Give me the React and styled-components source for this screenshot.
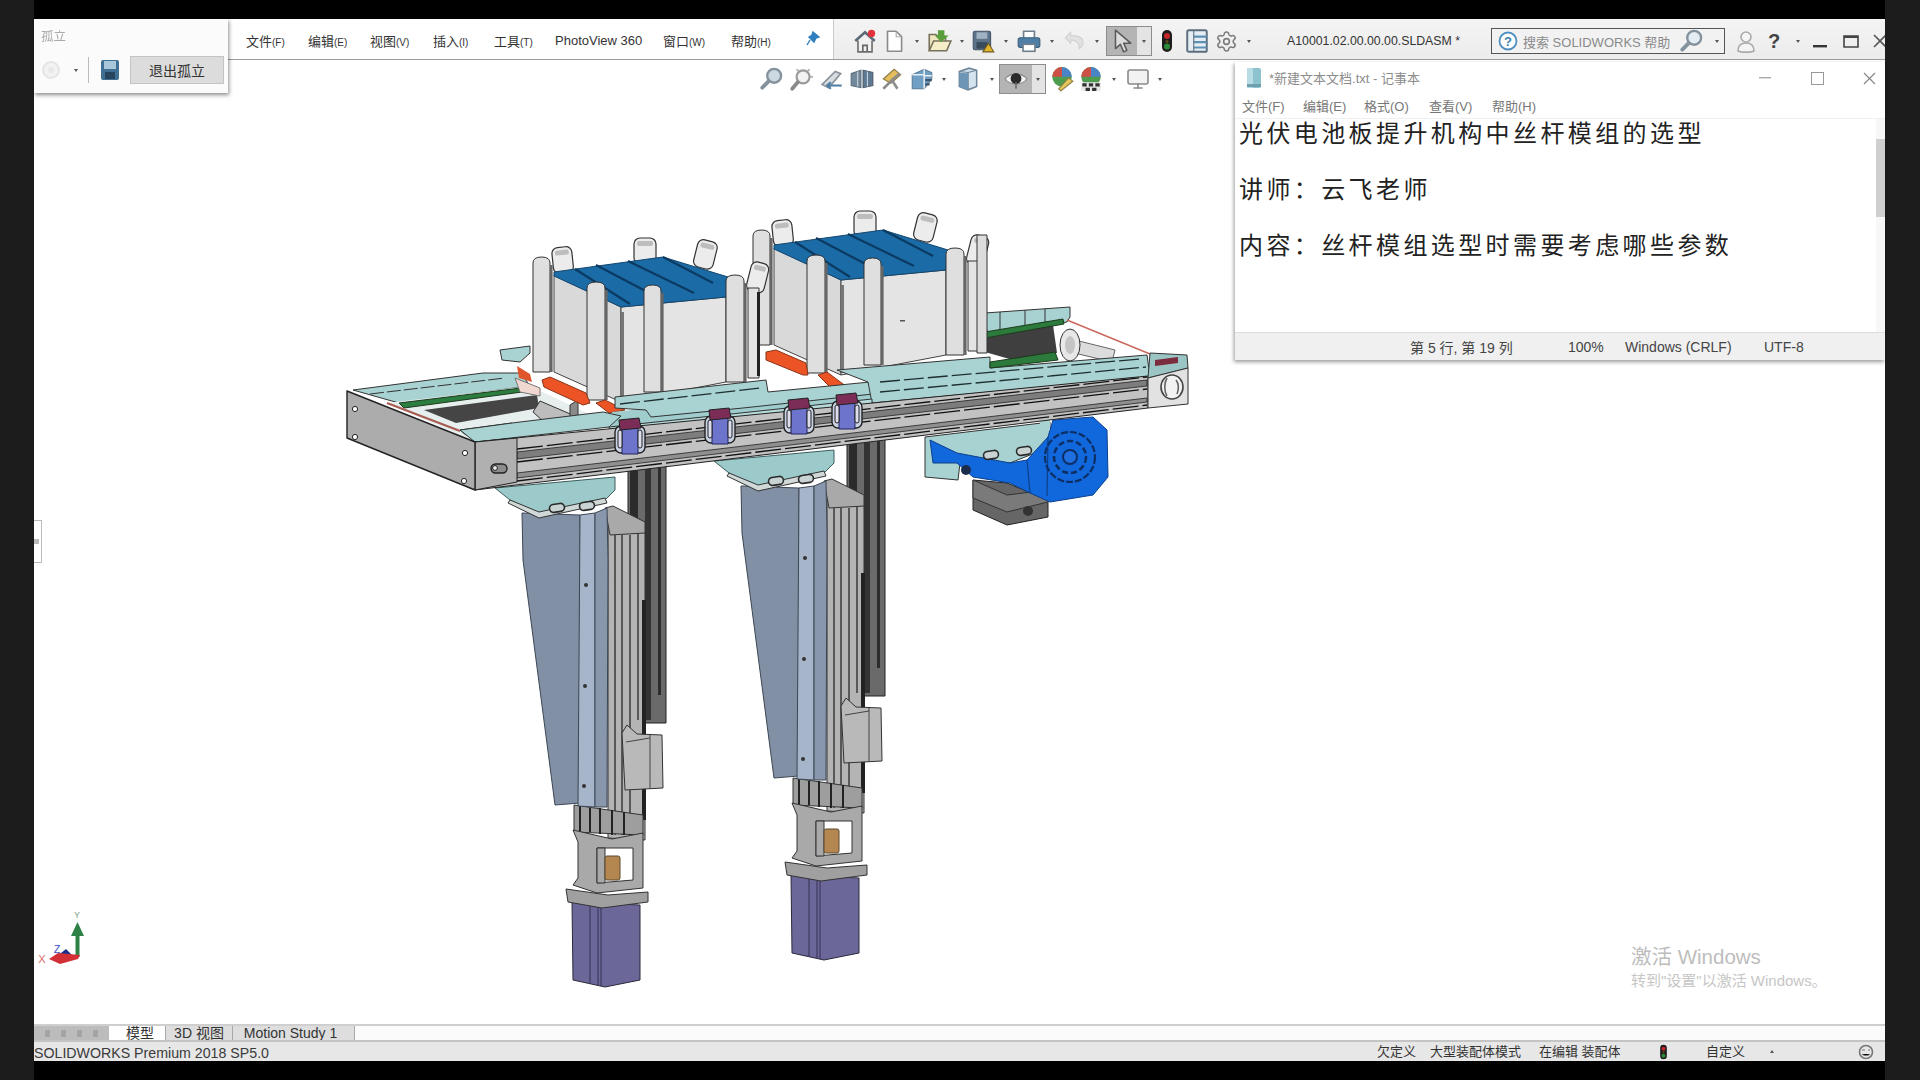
import React from "react";
import styled, { createGlobalStyle } from "styled-components";
import { Settings, Monitor } from "lucide-react";

const Global = createGlobalStyle`
  html, body { margin: 0; padding: 0; background: #000; }
  body { width: 1920px; height: 1080px; overflow: hidden; font-family: "Liberation Sans", "Noto Sans CJK SC", sans-serif; }
`;

const Page = styled.div`
  display: grid;
  grid-template-columns: 34px 1fr 35px;
  width: 1920px;
  height: 1080px;
  background: #000;
`;
const SideBar = styled.div`background: #1c1c1c;`;
const Screen = styled.div`
  position: relative;
  display: flex;
  flex-direction: column;
  min-width: 0;
  filter: blur(0.5px);
`;
const Letterbox = styled.div`flex: 0 0 19px; background: #000;`;

const TopBar = styled.header`
  flex: 0 0 41px;
  display: flex;
  align-items: center;
  background: linear-gradient(#f4f4f4, #ececec);
  border-bottom: 1px solid #9c9c9c;
  box-sizing: border-box;
  padding-left: 212px;
  overflow: hidden;
`;
const Menu = styled.nav`
  display: flex;
  align-items: center;
  flex: 0 0 605px;
  height: 100%;
  background: #fff;
  margin-left: -18px;
  padding-left: 18px;
  box-sizing: border-box;
`;
const MenuItem = styled.span`
  flex: 0 0 ${p => p.$w}px;
  font-size: 13px;
  color: #333;
  white-space: nowrap;
  position: relative;
  top: 1px;
  small { font-size: 10px; }
`;
const PinSlot = styled.span`
  flex: 1;
  display: flex;
  justify-content: flex-end;
  padding-right: 13px;
`;
const ToolRow = styled.div`
  display: flex;
  flex: none;
  align-items: center;
  height: 100%;
  padding: 4px 0 0 16px;
  border-left: 1px solid #c9c9c9;
  box-sizing: border-box;
`;
const Slot = styled.span`
  flex: 0 0 ${p => p.$w}px;
  min-width: 0;
  display: flex;
  justify-content: center;
  align-items: center;
  & > svg { flex: none; }
`;
const Arrow = styled.span`
  flex: 0 0 ${p => p.$w || 20}px;
  display: flex;
  justify-content: center;
  align-items: center;
  &::before {
    content: "";
    border: 2.5px solid transparent;
    border-top: 3px solid #555;
    border-bottom: 0;
  }
`;
const UpArrow = styled(Arrow)`
  transform: rotate(180deg);
`;
const PressedGroup = styled.span`
  flex: 0 0 ${p => p.$w}px;
  height: ${p => p.$h}px;
  display: flex;
  box-sizing: border-box;
  border: 1px solid #8d8d8d;
  background: linear-gradient(90deg, #b4b4b4 0 ${p => p.$split}px, #e4e4e4 ${p => p.$split}px);
  align-items: center;
`;
const DocTitle = styled.span`
  flex: 0 0 175px;
  margin-left: 29px;
  font-size: 12.3px;
  color: #333;
  white-space: nowrap;
`;
const SearchBox = styled.div`
  flex: 0 0 234px;
  height: 26px;
  margin-left: 29px;
  display: flex;
  align-items: center;
  box-sizing: border-box;
  border: 1.5px solid #555;
  background: #f2f2f2;
  padding-left: 6px;
  gap: 5px;
  span.hint { flex: 1; font-size: 13px; color: #8a8a8a; white-space: nowrap; }
`;
const WinRow = styled.div`
  display: flex;
  align-items: center;
  margin-left: 8px;
`;
const HeadsUp = styled.div`
  position: absolute;
  left: 723px;
  top: 64px;
  height: 30px;
  display: flex;
  align-items: center;
  z-index: 1;
`;

const Workspace = styled.main`
  flex: 1;
  min-height: 0;
  background: #fff;
  svg.stage { display: block; }
`;

const TabBar = styled.div`
  flex: 0 0 18px;
  min-height: 0;
  display: flex;
  background: #fbfbfb;
  border-top: 2px solid #cfcfcf;
  border-bottom: 2px solid #c4c4c4;
  box-sizing: border-box;
  overflow: hidden;
`;
const TabNav = styled.div`
  flex: 0 0 75px;
  display: flex;
  align-items: center;
  justify-content: space-around;
  background: #bcbcbc;
  padding: 0 6px;
  box-sizing: border-box;
  i { width: 5px; height: 7px; background: #a4a4a4; display: block; }
`;
const Tab = styled.div`
  flex: 0 0 ${p => p.$w}px;
  display: flex;
  align-items: center;
  justify-content: center;
  font-size: 14px;
  line-height: 14px;
  color: #333;
  white-space: nowrap;
  box-sizing: border-box;
  padding-left: ${p => p.$pl || 0}px;
  padding-right: ${p => p.$pr || 0}px;
  background: ${p => (p.$on ? "#fff" : "#dedede")};
  border-right: ${p => (p.$on ? "none" : "1px solid #a8a8a8")};
  border-left: ${p => (p.$first ? "1px solid #a8a8a8" : "none")};
`;
const Status = styled.footer`
  flex: 0 0 19px;
  min-height: 0;
  display: flex;
  align-items: center;
  background: #e7e7e7;
  overflow: hidden;
  font-size: 13px;
  line-height: 16px;
  color: #333;
  white-space: nowrap;
`;
const StatusLeft = styled.span`
  flex: 0 0 1343px;
  font-size: 14.2px;
  color: #3a3a3a;
  position: relative;
  top: 1px;
`;
const StatusItem = styled.span`
  flex: 0 0 ${p => p.$w}px;
  display: flex;
  align-items: center;
`;

const IsolatePanel = styled.section`
  position: absolute;
  left: 0;
  top: 19px;
  width: 194px;
  height: 74px;
  box-sizing: border-box;
  background: #fbfbfb;
  box-shadow: 1px 2px 4px rgba(0, 0, 0, .45);
  padding: 10px 0 0 7px;
  z-index: 3;
`;
const IsolateTitle = styled.div`
  font-size: 12.5px;
  color: #aaa;
  line-height: 16px;
`;
const IsolateRow = styled.div`
  display: flex;
  align-items: center;
  margin-top: 11px;
  margin-left: -7px;
  height: 28px;
`;
const Divider = styled.span`
  flex: 0 0 1px;
  height: 26px;
  background: #bbb;
  margin: 0 10px 0 5px;
`;
const ExitButton = styled.button`
  flex: 0 0 94px;
  margin-left: 9px;
  height: 28px;
  padding: 0;
  border: 1px solid #c4c4c4;
  background: #dcdcdc;
  font: 14px "Noto Sans CJK SC", sans-serif;
  color: #333;
`;

const Notepad = styled.section`
  position: absolute;
  left: 1201px;
  right: 0;
  top: 62px;
  height: 298px;
  display: flex;
  flex-direction: column;
  background: #fff;
  box-shadow: -1px 2px 4px rgba(0, 0, 0, .4);
  z-index: 2;
`;
const NoteTitle = styled.div`
  flex: 0 0 32px;
  display: flex;
  align-items: center;
  padding-left: 11px;
  font-size: 13px;
  color: #8c8c8c;
  white-space: nowrap;
`;
const NoteName = styled.span`
  flex: 0 0 484px;
  margin-left: 7px;
  position: relative;
  top: -1px;
`;
const NoteMenu = styled.div`
  flex: 0 0 24px;
  display: flex;
  align-items: center;
  padding-left: 7px;
  font-size: 13px;
  color: #777;
  position: relative;
  top: -1px;
`;
const NoteMenuItem = styled.span`
  flex: 0 0 ${p => p.$w}px;
  white-space: nowrap;
`;
const NoteBody = styled.div`
  flex: 1;
  position: relative;
  display: flex;
  min-height: 0;
  border-top: 1px solid #f0f0f0;
`;
const NoteText = styled.div`
  flex: 1;
  padding: 0 0 0 4px;
  font-family: "Noto Sans CJK SC", sans-serif;
  font-size: 24px;
  font-weight: 400;
  letter-spacing: 3.4px;
  line-height: 56px;
  color: #222;
  white-space: pre;
  margin-top: -15px;
`;
const ScrollTrack = styled.div`
  flex: 0 0 9px;
  background: #f7f7f7;
  position: relative;
  &::before {
    content: "";
    position: absolute;
    left: 0;
    right: 0;
    top: 20px;
    height: 78px;
    background: #cfcfcf;
  }
`;
const NoteStatus = styled.div`
  flex: 0 0 27px;
  display: flex;
  align-items: center;
  background: #f0f0f0;
  border-top: 1px solid #ddd;
  padding-left: 175px;
  font-size: 14px;
  color: #444;
  white-space: nowrap;
`;
const NoteStatusItem = styled.span`
  flex: 0 0 ${p => p.$w}px;
`;

const Watermark = styled.div`
  position: absolute;
  left: 1597px;
  top: 944px;
  color: #bdbdbd;
  font-size: 20.5px;
  line-height: 26px;
  white-space: nowrap;
  z-index: 1;
  small { display: block; font-size: 15px; line-height: 21px; color: #c6c6c6; }
`;
const Handle = styled.div`
  position: absolute;
  left: 0;
  top: 520px;
  width: 8px;
  height: 43px;
  box-sizing: border-box;
  border: 1px solid #bbb;
  border-left: 0;
  background: #fff;
  z-index: 1;
  &::after {
    content: "";
    position: absolute;
    left: 0;
    top: 18px;
    width: 5px;
    height: 5px;
    background: #bbb;
  }
`;

/* ---------- toolbar pictures ---------- */
const Pic = ({ w = 26, h = 26, children, vb = "0 0 24 24" }) => (
  <svg width={w} height={h} viewBox={vb} fill="none">{children}</svg>
);
const IHome = () => (
  <Pic>
    <path d="M3 12 12 4l9 8" stroke="#5c6a78" strokeWidth="2.4" />
    <path d="M5.5 11.5V22h13V11.5" fill="#f0f0f0" stroke="#6d6d6d" strokeWidth="1.5" />
    <path d="M10 22v-6h4v6" stroke="#666" strokeWidth="1.5" />
    <circle cx="18" cy="5" r="3.4" fill="#e2333c" />
  </Pic>
);
const IDoc = () => (
  <Pic>
    <path d="M6 3h8l5 5v13.5H6z" fill="#fff" stroke="#8b8b8b" strokeWidth="1.5" strokeLinejoin="round" />
    <path d="M14 3v5h5" stroke="#aaa" />
  </Pic>
);
const IOpen = () => (
  <Pic>
    <path d="M3 21V6h6l2 2h7v4" fill="#f0e6c0" stroke="#77705a" strokeWidth="1.5" />
    <path d="M3 21l4-9h16l-4 9z" fill="#f5ecc8" stroke="#77705a" strokeWidth="1.5" />
    <path d="M11 3h6v5h4l-7 6-6-6h3z" fill="#5a9e3c" transform="translate(0 -1)" />
  </Pic>
);
const ISave = () => (
  <Pic>
    <rect x="3" y="3" width="16" height="17" rx="1.5" fill="#5c7288" stroke="#44566a" />
    <rect x="6" y="4" width="10" height="6" fill="#9fb1c2" />
    <rect x="6" y="13" width="10" height="6" fill="#394a5c" />
    <path d="M12 22l5-8 5 8z" fill="#e2b32c" stroke="#6d5a1c" />
  </Pic>
);
const IPrint = () => (
  <Pic>
    <path d="M7 9V3h10v6" fill="#fff" stroke="#6f7f8e" strokeWidth="1.5" />
    <rect x="2" y="9" width="20" height="9" rx="2" fill="#4f7fa6" stroke="#3c5c78" />
    <rect x="6.5" y="15" width="11" height="6.5" fill="#fff" stroke="#6f7f8e" strokeWidth="1.5" />
  </Pic>
);
const IUndo = () => (
  <Pic>
    <path d="M8 4 3 9l5 5V11c5 0 8 2 8 8 3-2 4-5 3-8-1-3-5-4-11-4z" fill="#e2e2e2" stroke="#d0d0d0" />
  </Pic>
);
const ICursor = () => (
  <Pic>
    <path d="M6 2v17l4.5-4 3 7 3-1.4-3-6.6H20z" fill="#dcdcdc" stroke="#5a5a5a" strokeWidth="1.4" strokeLinejoin="round" />
  </Pic>
);
const ILight = ({ w = 14, h = 24 }) => (
  <svg width={w} height={h} viewBox="0 0 12 24">
    <rect x="1" y="1" width="10" height="22" rx="5" fill="#1d1d1d" />
    <circle cx="6" cy="7" r="3" fill="#c4262c" />
    <circle cx="6" cy="12.5" r="1.6" fill="#5c4a1c" />
    <circle cx="6" cy="17.5" r="3" fill="#2c8a3a" />
  </svg>
);
const IList = () => (
  <Pic>
    <rect x="3" y="2" width="18" height="20" rx="1.5" fill="#e6eef4" stroke="#5c6d7c" strokeWidth="1.8" />
    <path d="M9 8h12M9 13h12M9 18h12" stroke="#5d90b5" strokeWidth="2" />
    <path d="M9 2v20" stroke="#5c6d7c" />
  </Pic>
);
const IMag = ({ fill = "#cdd9e2" }) => (
  <Pic>
    <circle cx="14" cy="9" r="6.4" fill={fill} stroke="#84929e" strokeWidth="2.2" />
    <path d="M9 14 3 20" stroke="#84929e" strokeWidth="3.6" strokeLinecap="round" />
  </Pic>
);
const IZoomArea = () => (
  <Pic>
    <circle cx="13" cy="10" r="6" fill="#f2f2f2" stroke="#9a9a9a" strokeWidth="2" />
    <path d="M8 15 3 21" stroke="#8a8a8a" strokeWidth="3.4" strokeLinecap="round" />
    <path d="M7 3l2 2M19 3l-2 2M22 10h-3" stroke="#aaa" strokeWidth="1.6" />
  </Pic>
);
const IPrev = () => (
  <Pic>
    <path d="M3 17 15 5l5 2-11 13z" fill="#d8dde2" stroke="#8b949c" strokeWidth="1.6" />
    <path d="M7 18h14M7 18l4-3M7 18l4 3" stroke="#4f7da3" strokeWidth="2" />
  </Pic>
);
const ISection = () => (
  <Pic>
    <path d="M2 7l9-3v16l-9-2z" fill="#748a9c" stroke="#5c6d7c" />
    <path d="M13 4l9 2v12l-9 2z" fill="#5d7a92" stroke="#4c5c6c" />
    <path d="M8 5v14M17 5v14" stroke="#c9d3da" />
  </Pic>
);
const IDynamic = () => (
  <Pic>
    <path d="M4 12 14 3l6 5-9 8z" fill="#e4be5c" stroke="#8a7a44" />
    <path d="M4 21l8-8 5 8M12 13l7-6" stroke="#8c8c8c" strokeWidth="2.4" />
  </Pic>
);
const ICubeMenu = () => (
  <Pic>
    <path d="M3 8l11-5 7 3v6l-7 9H3z" fill="#6f9fc4" stroke="#5a7c98" />
    <path d="M14 3v6h7M3 8h11v13" stroke="#e8eef2" strokeWidth="1.4" />
    <path d="M15 13h6M15 17h4" stroke="#40546a" strokeWidth="2" />
  </Pic>
);
const IBox = () => (
  <Pic>
    <path d="M4 5l9-3 7 2v15l-8 3-8-3z" fill="#d5e3ee" stroke="#6f8598" strokeWidth="1.4" />
    <path d="M12 6v16" stroke="#6f8598" strokeWidth="1.4" />
    <path d="M4 5l8 1 8-2" stroke="#6f8598" />
    <path d="M4 6l8 1v15l-8-3z" fill="#6d96b6" />
  </Pic>
);
const IEye = () => (
  <Pic>
    <path d="M2 12c4-6 16-6 20 0-4 6-16 6-20 0z" fill="#f1f1f1" stroke="#888" />
    <circle cx="12" cy="11.5" r="5" fill="#2a2a2a" />
    <path d="M12 15v6" stroke="#666" strokeWidth="1.4" />
  </Pic>
);
const ISphere = ({ scene }) => (
  <Pic>
    <circle cx="12" cy="10" r="9" fill="#4f9b50" />
    <path d="M12 10H3a9 9 0 0 1 9-9z" fill="#cd5046" />
    <path d="M12 10h9a9 9 0 0 0-9-9z" fill="#4a84c8" />
    {scene
      ? <g><path d="M3 15h18v8H3z" fill="#e8e8e8" /><path d="M4 16h4v3H4zM10 16h4v3h-4zM16 16h4v3h-4zM7 20h4v3H7zM13 20h4v3h-4z" fill="#333" /></g>
      : <path d="M11 23l11-9-4-3-9 10z" fill="#e3c65e" stroke="#8b7c3e" />}
  </Pic>
);
const IUser = () => (
  <Pic w={24} h={28}>
    <circle cx="12" cy="8" r="5" fill="#f4f4f4" stroke="#aaa" strokeWidth="1.6" />
    <path d="M4 22c0-5 3-8 8-8s8 3 8 8c-3 1.5-13 1.5-16 0z" fill="#f4f4f4" stroke="#aaa" strokeWidth="1.6" />
  </Pic>
);
const ITxt = () => (
  <svg width="16" height="22" viewBox="0 0 16 22">
    <rect x="1" y="1" width="14" height="20" rx="2" fill="#8cc3cf" />
    <rect x="1" y="1" width="6" height="20" rx="1" fill="#b6dde3" />
    <rect x="1" y="17" width="14" height="3" fill="#6ea0ad" />
  </svg>
);
const IFloppy = () => (
  <svg width="20" height="22" viewBox="0 0 20 22">
    <rect x="1" y="1" width="18" height="20" rx="2" fill="#3f6f92" />
    <rect x="4" y="2" width="12" height="8" fill="#a8c7da" />
    <rect x="5" y="13" width="10" height="7" fill="#27465e" />
  </svg>
);
const IQuestion = () => (
  <svg width="20" height="20" viewBox="0 0 20 20">
    <circle cx="10" cy="10" r="8.5" fill="#fff" stroke="#4f8fc0" strokeWidth="1.8" />
    <text x="10" y="15" fontSize="13" fontWeight="700" textAnchor="middle" fill="#3e7fae" fontFamily="Liberation Sans">?</text>
  </svg>
);

/* ---------- the model ---------- */
const Post = ({ x, w, top, bottom }) => (
  <g>
    <path d={`M${x} ${bottom}V${top + 6}q0-6 ${w / 2}-6t${w / 2} 6V${bottom}z`} fill="#dfdfdf" stroke="#333" strokeWidth="1" />
    <rect x={x + w} y={top + 8} width="2.6" height={bottom - top - 8} fill="#666" />
  </g>
);
const TabTop = ({ x, y, w, h, tilt = 0 }) => (
  <g transform={`rotate(${tilt} ${x + w / 2} ${y + h})`}>
    <rect x={x} y={y} width={w} height={h} rx="6" fill="#ececec" stroke="#333" strokeWidth="1.2" />
    <rect x={x + 3} y={y + 3} width={w - 6} height="5" rx="2" fill="#bdbdbd" />
  </g>
);

const Tray = () => (
  <g>
    <TabTop x={554} y={247} w={20} h={26} tilt={-6} />
    <TabTop x={634} y={238} w={22} h={26} />
    <TabTop x={692} y={240} w={20} h={28} tilt={14} />
    <TabTop x={745} y={262} w={18} h={30} tilt={14} />
    <Post x={533} w={17} top={257} bottom={372} />
    <polygon points="554,275 621,307 621,402 554,372" fill="#d9d9d9" stroke="#444" />
    <polygon points="621,307 726,297 726,382 621,402" fill="#e4e4e4" stroke="#444" />
    <polygon points="554,272 663,257 728,277 726,297 621,307 554,276" fill="#1a6ba6" stroke="#14466e" />
    <path d="M575 269 630 304M596 265 655 296M628 261 694 293M663 257 713 283" stroke="#0b3a62" strokeWidth="2.2" fill="none" />
    <Post x={587} w={18} top={282} bottom={400} />
    <Post x={644} w={17} top={285} bottom={392} />
    <Post x={726} w={18} top={275} bottom={382} />
    <rect x="748" y="288" width="11" height="90" fill="#e4e4e4" stroke="#333" />
    <rect x="757" y="292" width="3" height="84" fill="#222" />
    <rect x="621" y="312" width="3" height="88" fill="#777" />
  </g>
);

const Slot2 = ({ x, y }) => (
  <rect x={x} y={y} width="15" height="8" rx="4" fill="#c9d3d3" stroke="#2a2a2a" strokeWidth="1.6" transform={`rotate(-8 ${x} ${y})`} />
);

const Column = () => (
  <g>
    {/* dark rail behind */}
    <rect x="628" y="465" width="38" height="258" fill="#6a6a6a" stroke="#222" />
    <rect x="630" y="465" width="8" height="240" fill="#2b2b2b" />
    <rect x="645" y="465" width="6" height="255" fill="#333" />
    <rect x="658" y="465" width="3" height="230" fill="#2c2c2c" />
    {/* linear module */}
    <polygon points="608,527 645,531 645,840 608,838" fill="#b4b4b4" stroke="#333" />
    <path d="M615 535V835M622 535V835M630 535V835M638 533V720" stroke="#3a3a3a" strokeWidth="1.5" />
    <rect x="642" y="600" width="4" height="220" fill="#222" />
    <polygon points="605,508 613,506 645,522 645,533 610,535" fill="#a9a9a9" stroke="#333" />
    {/* slider */}
    <polygon points="622,733 627,725 637,734 662,735 663,788 625,790" fill="#b9b9b9" stroke="#333" />
    <path d="M650 735V789M626 742 650 738" stroke="#444" />
    {/* lower stem */}
    <polygon points="574,805 643,815 643,835 574,832" fill="#9e9e9e" stroke="#333" />
    <path d="M580 805V832M590 808V832M600 808V834M612 810V835M624 812V835" stroke="#222" strokeWidth="2" />
    {/* coupler housing */}
    <path d="M573 830 612 839 643 833V888L597 893 573 885 578 878V842z" fill="#a9a9a9" stroke="#333" />
    <polygon points="597,848 633,848 633,880 597,883" fill="#fff" stroke="#333" />
    <polygon points="597,848 605,848 605,883 597,883" fill="#a9a9a9" stroke="#333" />
    <rect x="605" y="856" width="15" height="24" rx="2" fill="#b58750" stroke="#5a4a30" />
    {/* motor */}
    <polygon points="572,902 640,905 640,980 605,987 573,980" fill="#6c6799" stroke="#2a2a3a" />
    <path d="M590 905V984M598 905V986M601 905V986" stroke="#3c3a60" strokeWidth="1.2" />
    <polygon points="566,889 608,895 648,892 648,902 602,908 568,902" fill="#a0a0a0" stroke="#333" />
    {/* tapered panel */}
    <polygon points="522,513 523,560 555,805 580,803 580,515" fill="#8290a5" stroke="#3c4654" />
    <polygon points="580,515 595,513 595,807 578,806" fill="#a7b5ca" stroke="#3c4654" />
    <polygon points="595,513 607,508 608,560 607,807 595,807" fill="#8997ad" stroke="#3c4654" />
    <circle cx="586" cy="585" r="2" fill="#333" />
    <circle cx="585" cy="686" r="2" fill="#333" />
    <circle cx="584" cy="786" r="2" fill="#333" />
    {/* bracket */}
    <polygon points="495,488 615,477 615,490 605,500 539,515 510,500" fill="#9ccaca" stroke="#3c5c5c" />
    <polygon points="510,500 539,512 605,498 607,503 539,518 508,503" fill="#d0d8d8" stroke="#333" />
    <Slot2 x={549} y={505} />
    <Slot2 x={579} y={503} />
  </g>
);

const Clip = ({ x, y }) => (
  <g transform={`translate(${x} ${y})`}>
    <rect x="-15" y="-12" width="30" height="27" rx="6" fill="#c8d2e2" stroke="#222" strokeWidth="1.4" />
    <rect x="-8" y="-12" width="16" height="28" fill="#6d74cb" stroke="#24245c" />
    <rect x="-12" y="-8" width="4" height="18" rx="2" fill="#dde" stroke="#222" />
    <rect x="8" y="-8" width="4" height="18" rx="2" fill="#dde" stroke="#222" />
    <polygon points="-11,-18 9,-20 11,-10 -10,-8" fill="#7b2d57" stroke="#222" />
  </g>
);

const Machine = () => (
  <svg className="stage" width="1851" height="964" viewBox="34 60 1851 964">
    <g strokeLinejoin="round">
      {/* columns sit behind the frame */}
      <g transform="translate(219 -27)"><Column /></g>
      <Column />

      {/* right rear assembly */}
      <polygon points="985,313 1070,307 1070,317 1067,322 987,333" fill="#a8d2d2" stroke="#333" />
      <path d="M1000 312V331M1025 310V327M1045 309V324" stroke="#333" />
      <polygon points="985,338 1053,325 1057,353 1013,360 985,352" fill="#3f3f3f" />
      <polygon points="985,332 1063,319 1064,324 985,338" fill="#2d7b3c" stroke="#1c3a1c" />
      <path d="M1067 320 1150 354" stroke="#c96a5c" strokeWidth="1.5" />
      <polygon points="1075,340 1115,350 1112,362 1070,352" fill="#dcdcdc" stroke="#666" />
      <ellipse cx="1070" cy="345" rx="10" ry="16" fill="#e8e8e8" stroke="#333" />
      <ellipse cx="1070" cy="345" rx="5" ry="9" fill="#c4c4c4" />

      {/* gearbox */}
      <polygon points="973,480 973,510 1007,525 1048,517 1048,500 1007,483" fill="#666" stroke="#222" />
      <polygon points="973,480 1007,495 1048,490 1048,502 1007,512 973,498" fill="#7a7a7a" stroke="#333" />
      <circle cx="1028" cy="511" r="5" fill="#333" />
      <polygon points="925,437 1050,422 1050,447 1010,463 960,463 958,480 925,477" fill="#a8d2d2" stroke="#333" />
      <polygon points="930,440 957,453 1010,463 1027,460 1048,437 1053,420 1093,417 1107,430 1108,477 1093,495 1050,502 1030,493 1010,483 973,477 957,463 933,463" fill="#1167dc" stroke="#0c3f8a" />
      <path d="M1027 460 1030 493M1048 437 1047 496" stroke="#0c3f8a" strokeWidth="1.2" />
      <circle cx="1070" cy="457" r="25" fill="none" stroke="#0c2f66" strokeWidth="2.2" strokeDasharray="7 2" />
      <circle cx="1070" cy="457" r="16" fill="none" stroke="#0c2f66" strokeWidth="2.6" strokeDasharray="6 3" />
      <circle cx="1070" cy="457" r="7" fill="#1f6fe0" stroke="#0c2f66" strokeWidth="2" />
      <circle cx="966" cy="470" r="5" fill="#1c2c4c" />
      <polygon points="1040,438 1040,410 1050,410 1050,430" fill="#a8d2d2" />
      <Slot2 x={983} y={452} />
      <Slot2 x={1016} y={448} />

      {/* frame, left end */}
      <polygon points="353,390 483,373 521,373 530,386 399,403" fill="#a9d3d3" stroke="#333" />
      <path d="M370 394 505 378" stroke="#333" strokeDasharray="14 3" />
      <polygon points="387,403 530,386 612,425 475,442" fill="#e6eeee" />
      <polygon points="424,410 537,395 539,408 456,423" fill="#454545" />
      <polygon points="399,403 521,388 522,392 404,408" fill="#2c7d40" stroke="#1c3a1c" />
      <polygon points="460,430 512,423 514,427 466,435" fill="#2f8044" stroke="#1c3a1c" />
      <path d="M387 403 460 431" stroke="#a85c50" strokeWidth="2" />
      <polygon points="540,401 575,416 577,428 545,423 533,412" fill="#bdbdbd" stroke="#333" />
      <polygon points="570,405 578,400 578,424 570,426" fill="#8a8a8a" stroke="#333" />
      <polygon points="500,350 530,346 530,353 520,362 502,360" fill="#a9d3d3" stroke="#333" />
      <polygon points="517,366 530,374 532,382 519,378" fill="#e0562c" />
      <polygon points="515,378 540,388 540,396 520,392" fill="#f0d8d0" stroke="#777" />

      {/* trays */}
      <g transform="translate(220 -27)">
        <Tray />
        <rect x="757" y="262" width="10" height="118" fill="#dcdcdc" stroke="#333" />
      </g>
      <Tray />

      {/* orange stops */}
      <polygon points="542,380 550,377 586,393 590,403 583,405 544,387" fill="#ec5426" stroke="#8a3418" />
      <polygon points="596,403 605,400 625,410 609,413" fill="#ec5426" stroke="#8a3418" />
      <polygon points="766,352 776,350 806,363 808,375 803,375 766,360" fill="#ec5426" stroke="#8a3418" />
      <polygon points="818,375 827,372 847,387 831,388" fill="#ec5426" stroke="#8a3418" />

      {/* sliding plates */}
      <polygon points="612,412 880,385 880,402 611,432" fill="#9fcccc" />
      <polygon points="460,430 475,442 609,427 621,416 603,412 512,423" fill="#a9d3d3" stroke="#333" />
      <polygon points="615,397 766,380 768,392 870,382 873,394 743,408 651,417 646,410 615,408" fill="#a9d3d3" stroke="#333" />
      <polygon points="837,370 990,357 990,368 1147,355 1150,377 872,403 868,382" fill="#a9d3d3" stroke="#333" />
      <polygon points="990,362 1055,352 1058,360 990,368" fill="#2d7b3c" stroke="#1c3a1c" />
      <polygon points="609,427 872,399 872,409 611,437" fill="#b6dada" stroke="#333" />
      <path d="M620 404 760 388M880 382 1140 359M880 392 1146 367" stroke="#1f2f2f" strokeWidth="1.3" strokeDasharray="20 4" fill="none" />

      {/* rail */}
      <polygon points="475,442 1148,376 1148,408 475,490" fill="#c2c2c2" stroke="#222" />
      <polygon points="517,452 1147,380 1147,386 517,459" fill="#7d7d7d" stroke="#222" strokeWidth="0.8" />
      <polygon points="517,473 1147,398 1147,402 517,478" fill="#8f8f8f" stroke="#222" strokeWidth="0.8" />
      <path d="M517 449 1147 377M517 462 1147 389M517 481 1147 405" stroke="#111" strokeWidth="1.3" strokeDasharray="26 4" fill="none" />
      <polygon points="475,442 517,438 517,482 475,490" fill="#b0b0b0" stroke="#222" />
      <rect x="491" y="464" width="16" height="9" rx="4.5" fill="#8c8c8c" stroke="#222" strokeWidth="1.4" />
      <circle cx="495" cy="468" r="2.4" fill="#eee" stroke="#222" />

      {/* end plate */}
      <polygon points="347,391 475,442 475,490 347,438" fill="#acacac" stroke="#222" strokeWidth="1.4" />
      <circle cx="355" cy="409" r="2.6" fill="#fff" stroke="#222" />
      <circle cx="355" cy="437" r="2.6" fill="#fff" stroke="#222" />
      <circle cx="465" cy="453" r="2.6" fill="#fff" stroke="#222" />
      <circle cx="464" cy="481" r="2.6" fill="#fff" stroke="#222" />

      {/* right end */}
      <polygon points="1150,353 1187,355 1188,368 1148,378" fill="#9bc4c4" stroke="#333" />
      <polygon points="1155,360 1178,357 1178,363 1155,366" fill="#7b2d3d" />
      <polygon points="1148,378 1188,368 1188,404 1148,408" fill="#e2e2e2" stroke="#333" />
      <ellipse cx="1172" cy="387" rx="11" ry="12" fill="#f2f2f2" stroke="#444" strokeWidth="1.6" />
      <path d="M1167 378c-3 5-3 13 0 18M1176 380c3 4 3 9 1 14" stroke="#666" strokeWidth="1.6" fill="none" />

      <Clip x={630} y={438} />
      <Clip x={720} y={428} />
      <Clip x={799} y={418} />
      <Clip x={847} y={413} />

      <rect x="900" y="320" width="5" height="1.5" fill="#555" />
    </g>

    {/* triad */}
    <g>
      <rect x="75.5" y="933" width="4" height="24" fill="#2e8247" />
      <polygon points="77.5,922 84,936 71,936" fill="#2e8247" />
      <polygon points="56,957 66,949 74,957" fill="#1c2f8c" />
      <polygon points="49,959 58,953 80,955 78,959 60,964" fill="#d32f36" />
      <text x="77" y="918" fontSize="9" fill="#7ba58a" textAnchor="middle" fontFamily="Liberation Sans">Y</text>
      <text x="57" y="953" fontSize="11" fill="#3c54c8" textAnchor="middle" fontFamily="Liberation Sans">Z</text>
      <text x="42" y="963" fontSize="11" fill="#d86a6a" textAnchor="middle" fontFamily="Liberation Sans">X</text>
    </g>
  </svg>
);

export default function App() {
  return (
    <Page>
      <Global />
      <SideBar />
      <Screen>
        <Letterbox />
        <TopBar>
          <Menu>
            <MenuItem $w={62}>文件<small>(F)</small></MenuItem>
            <MenuItem $w={62}>编辑<small>(E)</small></MenuItem>
            <MenuItem $w={63}>视图<small>(V)</small></MenuItem>
            <MenuItem $w={61}>插入<small>(I)</small></MenuItem>
            <MenuItem $w={61}>工具<small>(T)</small></MenuItem>
            <MenuItem $w={108}>PhotoView 360</MenuItem>
            <MenuItem $w={68}>窗口<small>(W)</small></MenuItem>
            <MenuItem $w={60}>帮助<small>(H)</small></MenuItem>
            <PinSlot>
              <svg width="14" height="16" viewBox="0 0 14 16">
                <path d="M7 1l6 5-3 1-2 4-5-5 3-2zM4 9l-3 5" fill="#2f7fbe" stroke="#2f7fbe" strokeWidth="1.4" />
              </svg>
            </PinSlot>
          </Menu>
          <ToolRow>
            <Slot $w={30}><IHome /></Slot>
            <Slot $w={28}><IDoc /></Slot>
            <Arrow $w={18} />
            <Slot $w={26}><IOpen /></Slot>
            <Arrow />
            <Slot $w={22}><ISave /></Slot>
            <Arrow $w={23} />
            <Slot $w={24}><IPrint /></Slot>
            <Arrow $w={22} />
            <Slot $w={24}><IUndo /></Slot>
            <Arrow $w={19} />
            <PressedGroup $w={45} $h={30} $split={30}>
              <Slot $w={30}><ICursor /></Slot>
              <Arrow $w={14} />
            </PressedGroup>
            <Slot $w={30}><ILight /></Slot>
            <Slot $w={30}><IList /></Slot>
            <Slot $w={28}><Settings size={23} color="#7b7b7b" strokeWidth={1.6} /></Slot>
            <Arrow $w={18} />
            <DocTitle>A10001.02.00.00.00.SLDASM *</DocTitle>
            <SearchBox>
              <IQuestion />
              <span className="hint">搜索 SOLIDWORKS 帮助</span>
              <IMag fill="#e4edf3" />
              <Arrow $w={14} />
            </SearchBox>
            <WinRow>
              <Slot $w={26}><IUser /></Slot>
              <Slot $w={30}>
                <svg width="14" height="20" viewBox="0 0 14 20"><text x="7" y="17" fontSize="20" fontWeight="700" textAnchor="middle" fill="#444" fontFamily="Liberation Sans">?</text></svg>
              </Slot>
              <Arrow $w={18} />
              <Slot $w={26}><svg width="14" height="14"><rect x="0" y="11" width="14" height="2.4" fill="#333" /></svg></Slot>
              <Slot $w={36}><svg width="16" height="14"><path d="M1 2h14v11H1z" fill="none" stroke="#444" strokeWidth="1.6" /><path d="M1 3h14" stroke="#444" strokeWidth="2" /></svg></Slot>
              <Slot $w={22}><svg width="14" height="14"><path d="M1 1l12 12M13 1L1 13" stroke="#555" strokeWidth="1.6" /></svg></Slot>
            </WinRow>
          </ToolRow>
        </TopBar>

        <Workspace>
          <Machine />
        </Workspace>

        <TabBar>
          <TabNav><i /><i /><i /><i /></TabNav>
          <Tab $w={56} $on $pl={6}>模型</Tab>
          <Tab $w={68} $first>3D 视图</Tab>
          <Tab $w={122} $pr={6}>Motion Study 1</Tab>
        </TabBar>
        <Status>
          <StatusLeft>SOLIDWORKS Premium 2018 SP5.0</StatusLeft>
          <StatusItem $w={53}>欠定义</StatusItem>
          <StatusItem $w={109}>大型装配体模式</StatusItem>
          <StatusItem $w={120}>在编辑 装配体</StatusItem>
          <StatusItem $w={47}><ILight w={9} h={16} /></StatusItem>
          <StatusItem $w={63}>自定义</StatusItem>
          <StatusItem $w={88}><UpArrow $w={6} /></StatusItem>
          <StatusItem $w={20}>
            <svg width="18" height="16" viewBox="0 0 18 16"><circle cx="9" cy="8" r="6.5" fill="none" stroke="#777" strokeWidth="1.6" /><path d="M5 6h3M11 6h2M5 10c2 2 6 2 8 0" stroke="#777" /></svg>
          </StatusItem>
        </Status>
        <Letterbox />

        <HeadsUp>
          <Slot $w={30}><IMag /></Slot>
          <Slot $w={30}><IZoomArea /></Slot>
          <Slot $w={30}><IPrev /></Slot>
          <Slot $w={30}><ISection /></Slot>
          <Slot $w={30}><IDynamic /></Slot>
          <Slot $w={30}><ICubeMenu /></Slot>
          <Arrow $w={14} />
          <Slot $w={34}><IBox /></Slot>
          <Arrow $w={14} />
          <PressedGroup $w={46} $h={30} $split={32}>
            <Slot $w={31}><IEye /></Slot>
            <Arrow $w={14} />
          </PressedGroup>
          <Slot $w={32}><ISphere /></Slot>
          <Slot $w={26}><ISphere scene /></Slot>
          <Arrow />
          <Slot $w={28}><Monitor size={24} color="#8a8a8a" strokeWidth={1.6} fill="#f2f2f2" /></Slot>
          <Arrow $w={16} />
        </HeadsUp>

        <IsolatePanel>
          <IsolateTitle>孤立</IsolateTitle>
          <IsolateRow>
            <Slot $w={34}>
              <svg width="22" height="22" viewBox="0 0 22 22"><circle cx="11" cy="11" r="8" fill="#f2f2f2" stroke="#e4e4e4" strokeWidth="2" /><circle cx="11" cy="11" r="3" fill="#e8e8e8" /></svg>
            </Slot>
            <Arrow $w={15} />
            <Divider />
            <Slot $w={22}><IFloppy /></Slot>
            <ExitButton>退出孤立</ExitButton>
          </IsolateRow>
        </IsolatePanel>

        <Notepad>
          <NoteTitle>
            <ITxt />
            <NoteName>*新建文本文档.txt - 记事本</NoteName>
            <Slot $w={24}><svg width="12" height="3"><rect width="12" height="1.4" fill="#aaa" /></svg></Slot>
            <Slot $w={80}><svg width="13" height="13"><rect x="0.5" y="0.5" width="12" height="12" fill="none" stroke="#999" /></svg></Slot>
            <Slot $w={24}><svg width="13" height="13"><path d="M1 1l11 11M12 1 1 12" stroke="#888" strokeWidth="1.2" /></svg></Slot>
          </NoteTitle>
          <NoteMenu>
            <NoteMenuItem $w={61}>文件(F)</NoteMenuItem>
            <NoteMenuItem $w={61}>编辑(E)</NoteMenuItem>
            <NoteMenuItem $w={65}>格式(O)</NoteMenuItem>
            <NoteMenuItem $w={63}>查看(V)</NoteMenuItem>
            <NoteMenuItem $w={60}>帮助(H)</NoteMenuItem>
          </NoteMenu>
          <NoteBody>
            <NoteText>{"光伏电池板提升机构中丝杆模组的选型\n讲师\uFF1A云飞老师\n内容\uFF1A丝杆模组选型时需要考虑哪些参数"}</NoteText>
            <ScrollTrack />
          </NoteBody>
          <NoteStatus>
            <NoteStatusItem $w={158}>第 5 行, 第 19 列</NoteStatusItem>
            <NoteStatusItem $w={57}>100%</NoteStatusItem>
            <NoteStatusItem $w={139}>Windows (CRLF)</NoteStatusItem>
            <NoteStatusItem $w={50}>UTF-8</NoteStatusItem>
          </NoteStatus>
        </Notepad>

        <Handle />
        <Watermark>
          激活 Windows
          <small>转到"设置"以激活 Windows。</small>
        </Watermark>
      </Screen>
      <SideBar />
    </Page>
  );
}
